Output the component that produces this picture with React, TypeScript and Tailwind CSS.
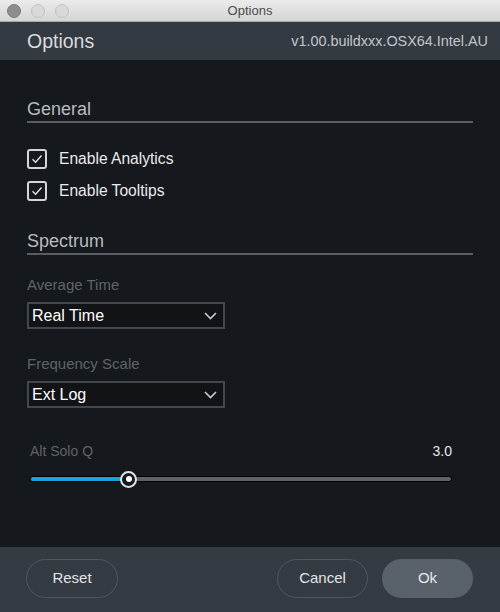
import React, { useState } from 'react';

const FONT = { fontFamily: '"Liberation Sans", Arial, Helvetica, sans-serif' };

function Checkbox({ label, checked, onToggle }: { label: string; checked: boolean; onToggle: () => void }) {
  return (
    <button type="button" onClick={onToggle} className="flex items-center h-5 text-left">
      <span className="w-5 h-5 rounded-[3px] border-2 border-[#d4d5d6] flex items-center justify-center">
        {checked && (
          <svg width="12" height="10" viewBox="0 0 12 10" fill="none">
            <path d="M1.5 5.2 L4.6 8.2 L10.5 1.5" stroke="#e4e5e6" strokeWidth="1.4" />
          </svg>
        )}
      </span>
      <span className="ml-[12px] text-[15.6px] text-[#e9eaeb]">{label}</span>
    </button>
  );
}

function Select({ value }: { value: string }) {
  return (
    <div className="w-[198px] h-[27px] border-2 border-[#43484e] bg-[#111317] flex items-center justify-between pl-[3px] pr-[6px]">
      <span className="text-[16px] text-white leading-none">{value}</span>
      <svg width="13" height="8" viewBox="0 0 13 8" fill="none">
        <path d="M1 1 L6.5 6.5 L12 1" stroke="#c8cacc" strokeWidth="1.6" />
      </svg>
    </div>
  );
}

function SectionTitle({ children }: { children: React.ReactNode }) {
  return (
    <div className="border-b-2 border-[#575d63] pb-[1px]">
      <div className="text-[18px] leading-[22px] text-[#b9bcbf]">{children}</div>
    </div>
  );
}

export default function App() {
  const [analytics, setAnalytics] = useState(true);
  const [tooltips, setTooltips] = useState(true);
  const q = 3.0;
  const pct = 23.3;

  return (
    <div style={FONT} className="w-[500px] h-[612px] flex flex-col bg-[#15181c] overflow-hidden">
      {/* window title bar */}
      <div className="relative h-[22px] bg-gradient-to-b from-[#ebebeb] to-[#d5d5d5] border-b border-[#a9a9a9] flex items-center">
        <div className="flex items-center gap-[10px] pl-[7px]">
          <span className="w-[14px] h-[14px] rounded-full bg-[#8d8d8d] border border-[#7c7c7c]" />
          <span className="w-[14px] h-[14px] rounded-full bg-[#d9d9d9] border border-[#c2c2c2]" />
          <span className="w-[14px] h-[14px] rounded-full bg-[#d9d9d9] border border-[#c2c2c2]" />
        </div>
        <div className="absolute inset-0 flex items-center justify-center text-[13px] text-[#4b4b4b]">Options</div>
      </div>

      {/* header */}
      <div className="h-[38px] bg-[#343a42] flex items-center justify-between pl-[27px] pr-[12px] pt-[1px]">
        <span className="text-[19.5px] text-[#d9dbdd]">Options</span>
        <span className="text-[14.4px] text-[#c3c6c9]">v1.00.buildxxx.OSX64.Intel.AU</span>
      </div>

      {/* body */}
      <div className="flex-1 px-[27px] pt-[38px]">
        <SectionTitle>General</SectionTitle>
        <div className="mt-[26px] flex flex-col gap-[12px]">
          <Checkbox label="Enable Analytics" checked={analytics} onToggle={() => setAnalytics(!analytics)} />
          <Checkbox label="Enable Tooltips" checked={tooltips} onToggle={() => setTooltips(!tooltips)} />
        </div>

        <div className="mt-[29px]">
          <SectionTitle>Spectrum</SectionTitle>
        </div>

        <div className="mt-[21px] text-[15px] leading-[18px] text-[#5e6469]">Average Time</div>
        <div className="mt-[8px]">
          <Select value="Real Time" />
        </div>

        <div className="mt-[26px] text-[15px] leading-[18px] text-[#5e6469]">Frequency Scale</div>
        <div className="mt-[8px]">
          <Select value="Ext Log" />
        </div>

        <div className="mt-[34px] pl-[3px] pr-[21px]">
          <div className="flex justify-between text-[14px] leading-[18px]">
            <span className="text-[#5e6469]">Alt Solo Q</span>
            <span className="text-[#e6e7e8]">{q.toFixed(1)}</span>
          </div>
          <div className="relative mt-[16px] h-[6px] rounded-full bg-[#5b646c] border border-black">
            <div className="absolute left-0 top-0 bottom-0 rounded-full bg-[#18a4d8]" style={{ width: `${pct}%` }} />
            <div
              className="absolute top-1/2 w-[17px] h-[17px] -ml-[8.5px] -mt-[8.5px] rounded-full border-2 border-[#e2e3e4] bg-[#15181c] flex items-center justify-center"
              style={{ left: `${pct}%` }}
            >
              <span className="w-[6px] h-[6px] rounded-full bg-white" />
            </div>
          </div>
        </div>
      </div>

      {/* footer */}
      <div className="h-[65px] bg-[#343b43] flex items-start justify-between pl-[26px] pr-[27px] pt-[12px]">
        <button className="w-[92px] h-[39px] rounded-full border border-[#4f575f] text-[15px] text-[#e3e4e5]">Reset</button>
        <div className="flex gap-[14px]">
          <button className="w-[91px] h-[39px] rounded-full border border-[#4f575f] text-[15px] text-[#e3e4e5]">Cancel</button>
          <button className="w-[91px] h-[39px] rounded-full bg-[#59626a] text-[15px] text-[#e8e9ea]">Ok</button>
        </div>
      </div>
    </div>
  );
}
